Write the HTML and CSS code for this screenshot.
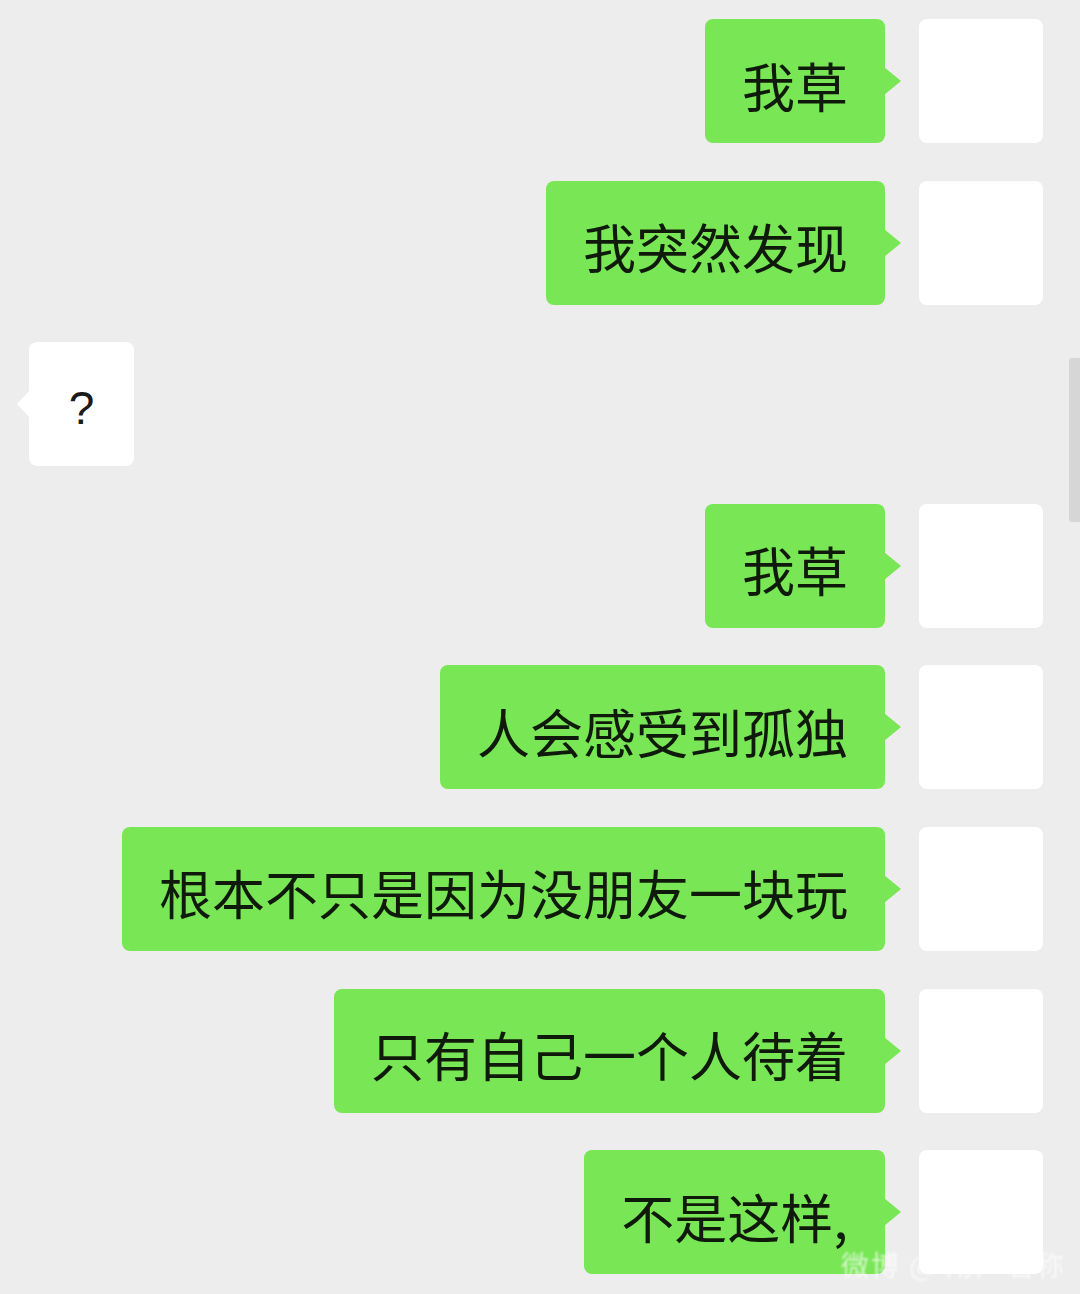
FILE: index.html
```html
<!DOCTYPE html>
<html lang="zh-CN">
<head>
<meta charset="utf-8">
<title>聊天</title>
<link rel="stylesheet" href="styles.css">
</head>
<body>
<div class="chat">
  <div class="row me"><div class="bubble">我草</div><div class="avatar"></div></div>
  <div class="row me"><div class="bubble">我突然发现</div><div class="avatar"></div></div>
  <div class="row other"><div class="bubble q">?</div></div>
  <div class="row me"><div class="bubble">我草</div><div class="avatar"></div></div>
  <div class="row me"><div class="bubble">人会感受到孤独</div><div class="avatar"></div></div>
  <div class="row me"><div class="bubble">根本不只是因为没朋友一块玩</div><div class="avatar"></div></div>
  <div class="row me"><div class="bubble">只有自己一个人待着</div><div class="avatar"></div></div>
  <div class="row me"><div class="bubble">不是这样,</div><div class="avatar"></div></div>
  <div class="scrollbar"></div>
  <div class="watermark">微博 @ 用户名称</div>
</div>
</body>
</html>
```

FILE: styles.css
```css
html, body {
  margin: 0;
  padding: 0;
  background: #ededed;
}
.chat {
  position: relative;
  width: 1080px;
  height: 1294px;
  overflow: hidden;
  box-sizing: border-box;
  padding: 19px 37px 0 29px;
  display: flex;
  flex-direction: column;
  gap: 37.6px;
  font-family: "Noto Sans CJK SC", "Noto Sans", sans-serif;
}
.row {
  display: flex;
  align-items: flex-start;
  height: 124px;
  flex: none;
}
.row.me {
  justify-content: flex-end;
  gap: 34px;
}
.row.other {
  justify-content: flex-start;
}
.bubble {
  position: relative;
  height: 124px;
  box-sizing: border-box;
  padding: 8px 37px 0 37px;
  border-radius: 8px;
  display: flex;
  align-items: center;
  font-size: 53px;
  line-height: 1;
  color: #0f1a0b;
  white-space: nowrap;
}
.me .bubble {
  background: #78e655;
}
.me .bubble::after {
  content: "";
  position: absolute;
  right: -16px;
  top: 48px;
  border-left: 17px solid #78e655;
  border-top: 14px solid transparent;
  border-bottom: 14px solid transparent;
}
.other .bubble {
  background: #ffffff;
}
.other .bubble::before {
  content: "";
  position: absolute;
  left: -12px;
  top: 48px;
  border-right: 13px solid #ffffff;
  border-top: 14px solid transparent;
  border-bottom: 14px solid transparent;
}
.bubble.q {
  width: 105px;
  padding: 8px 0 0 0;
  justify-content: center;
  font-family: "Liberation Sans", "Noto Sans", sans-serif;
  font-size: 46px;
  color: #1a1a1a;
}
.avatar {
  width: 124px;
  height: 124px;
  background: #ffffff;
  border-radius: 8px;
  flex: none;
}
.scrollbar {
  position: absolute;
  right: 0;
  top: 358px;
  width: 11px;
  height: 164px;
  background: #d6d6d6;
  border-radius: 3px 0 0 3px;
}
.watermark {
  position: absolute;
  right: 14px;
  bottom: 10px;
  font-size: 28px;
  color: rgba(255, 255, 255, 0.7);
  letter-spacing: 2px;
  filter: blur(1px);
}
```
